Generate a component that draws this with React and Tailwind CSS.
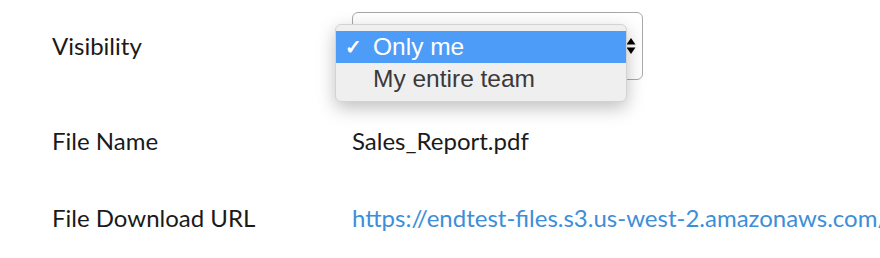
import React from 'react';

const rows = [
    { label: 'File Name', value: 'Sales_Report.pdf', gap: 'mt-[47px]' },
    { label: 'File Download URL', value: 'https://endtest-files.s3.us-west-2.amazonaws.com/', link: true, gap: 'mt-[49px]' },
];

function VisibilitySelect() {
    return (
        <div className="relative w-[291px] h-[68px]">
            <div className="w-full h-full rounded-[6px] border border-[#a9a9a9] bg-white flex items-center justify-end pr-[6px]">
                <svg width="10" height="18" viewBox="0 0 10 18" className="text-black">
                    <path d="M5 1 L9.5 7.5 L0.5 7.5 Z" fill="currentColor" />
                    <path d="M5 17 L9.5 10.5 L0.5 10.5 Z" fill="currentColor" />
                </svg>
            </div>
            {/* open popup */}
            <div className="absolute left-[-17px] top-[12px] w-[292px] rounded-[6px] border border-[#d3d3d3] bg-[#efefef] py-[6px] shadow-[0_6px_18px_rgba(0,0,0,0.25)] font-['Liberation_Sans',sans-serif] text-[24.5px] leading-none">
                <div className="h-[32px] flex items-center bg-[#4c9cf8] text-white">
                    <span className="w-[37px] pl-[9px] text-[20px] font-bold">✓</span>
                    <span>Only me</span>
                </div>
                <div className="h-[32px] flex items-center text-[#3a3a3a]">
                    <span className="w-[37px]" />
                    <span>My entire team</span>
                </div>
            </div>
        </div>
    );
}

export default function App() {
    return (
        <div className="w-[880px] h-[258px] bg-white overflow-hidden font-['Lato',sans-serif] text-[24px] leading-[28px] text-[#1a1a1a] pt-[12px]">
            <div className="flex items-center pl-[52px]">
                <div className="w-[300px]">Visibility</div>
                <VisibilitySelect />
            </div>
            {rows.map((r) => (
                <div key={r.label} className={`flex items-center pl-[52px] h-[28px] ${r.gap}`}>
                    <div className="w-[300px] shrink-0">{r.label}</div>
                    <div className={r.link ? 'text-[#3d8ed8] whitespace-nowrap' : 'whitespace-nowrap'}>{r.value}</div>
                </div>
            ))}
        </div>
    );
}
